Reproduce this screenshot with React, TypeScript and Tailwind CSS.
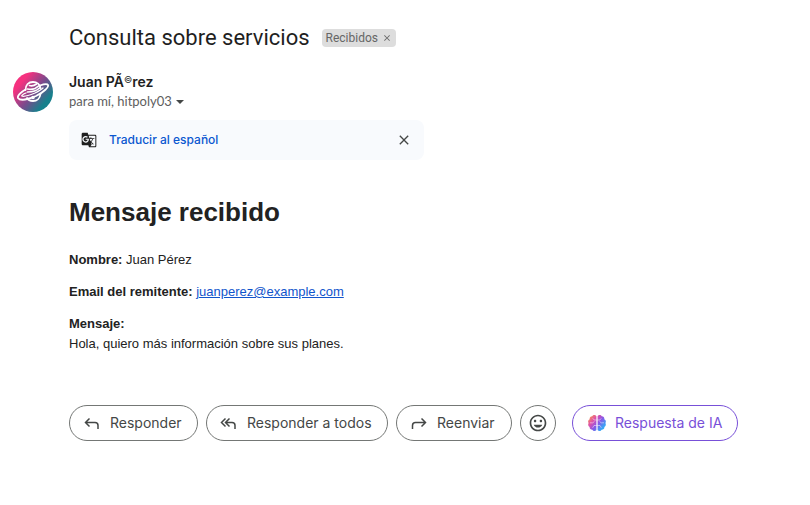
import type { ReactNode } from "react";
import { MdClose, MdGTranslate, MdInsertEmoticon } from "react-icons/md";

function Avatar() {
  return (
    <svg viewBox="0 0 40 40" className="size-10 shrink-0" role="img" aria-label="Juan Pérez">
      <defs>
        <linearGradient id="avatar" x1="0.1" y1="0.15" x2="0.9" y2="0.8">
          <stop offset="0.15" stopColor="#f5317f" />
          <stop offset="0.55" stopColor="#7b4a8c" />
          <stop offset="0.9" stopColor="#17808c" />
        </linearGradient>
      </defs>
      <circle cx="20" cy="20" r="20" fill="url(#avatar)" />
      <g fill="none" stroke="#fff" strokeLinecap="round" strokeLinejoin="round">
        <path d="M12.5 18c0-5 3-8 7.5-8 4 0 7 2.500 7.500 6" strokeWidth="1.8" />
        <path d="M12.500 17.500C8 20 4 24 5 26c2 3 10 1.500 18-2 8-4 13-9 12-11-1-2-4-1-8 .5" strokeWidth="1.8" />
        <path d="M13 21c-3 1-5 3-4 3 2 1 8-1 13-3 4-2 7-4 8-5" strokeWidth="1.3" />
        <path d="M14.500 17c4 1 8 0 11-3M14.500 20c5 0 9-1 12-4M16.500 13.500c3 1 5 0 7-1.500" strokeWidth="1.7" />
        <path d="M14 26c1 2 3 3 6 3 4 0 7-3 7.500-7" strokeWidth="1.8" />
        <circle cx="20" cy="25.500" r="1.2" strokeWidth="1.2" />
      </g>
    </svg>
  );
}

function CaretIcon() {
  return (
    <svg viewBox="0 0 8 4" className="h-1 w-2" fill="#444746" aria-hidden="true">
      <path d="M0 0h8L4 4z" />
    </svg>
  );
}

function ReplyIcon() {
  return (
    <svg viewBox="0 0 20 20" className="size-5" fill="none" stroke="currentColor" strokeWidth="1.5" aria-hidden="true">
      <path d="M7.500 5.500 3.500 9.500l4 4M4 9.500h9a3 3 0 0 1 3 3v3.500" />
    </svg>
  );
}

function ReplyAllIcon() {
  return (
    <svg viewBox="0 0 20 20" className="size-5" fill="none" stroke="currentColor" strokeWidth="1.5" aria-hidden="true">
      <path d="M6.500 5.500 2.500 9.500l4 4M10.500 5.500 6.500 9.500l4 4M7 9.500h6a3 3 0 0 1 3 3v3.500" />
    </svg>
  );
}

function ForwardIcon() {
  return (
    <svg viewBox="0 0 20 20" className="size-5" fill="none" stroke="currentColor" strokeWidth="1.5" aria-hidden="true">
      <path d="m12.500 5.500 4 4-4 4M16 9.500H6.500a3 3 0 0 0-3 3v3.500" />
    </svg>
  );
}

function BrainIcon() {
  return (
    <svg viewBox="0 0 20 20" className="size-5" aria-hidden="true">
      <defs>
        <linearGradient id="brain" gradientUnits="userSpaceOnUse" x1="2" y1="3" x2="18" y2="17">
          <stop offset="0.05" stopColor="#f58a5c" />
          <stop offset="0.3" stopColor="#dc4fae" />
          <stop offset="0.55" stopColor="#8758e8" />
          <stop offset="0.85" stopColor="#37a5f5" />
        </linearGradient>
      </defs>
      <path
        fill="url(#brain)"
        d="M9.400 3.200C8.500 1.500 6 1.500 5.200 3.200 3.300 3.200 2.300 4.800 2.700 6.300 1 7 .7 8.900 1.600 10c-.9 1.400-.4 3.300 1 4-.1 1.700 1.200 2.900 2.800 2.800.8 1.600 3.100 1.700 4 .2zM10.600 3.200c.9-1.700 3.400-1.700 4.200 0 1.900 0 2.900 1.600 2.500 3.100 1.700.7 2 2.600 1.100 3.700.9 1.400.4 3.300-1 4 .1 1.700-1.200 2.900-2.800 2.800-.8 1.600-3.100 1.700-4 .2z"
      />
      <path
        fill="none"
        stroke="#fff"
        strokeOpacity="0.6"
        strokeWidth="0.8"
        strokeLinecap="round"
        d="M9.400 7H7.200L6 5.600M3.400 9.800h2.400l1.400-1.200M9.400 12.500H7l-1.200 2M10.600 7h2.200L14 5.600M16.600 9.800h-2.400l-1.400-1.200M10.600 12.500H13l1.200 2"
      />
    </svg>
  );
}

function ActionButton({ icon, children, className }: { icon: ReactNode; children: ReactNode; className: string }) {
  return (
    <button
      type="button"
      className={`flex h-9 shrink-0 items-center gap-2 whitespace-nowrap rounded-full border text-sm ${className}`}
    >
      {icon}
      {children}
    </button>
  );
}

export default function App() {
  return (
    <main className="bg-white pt-6 pr-4 pl-[13px] font-['Inter','Liberation_Sans',sans-serif] text-[#1f1f1f]">
      <header className="flex h-7 items-center gap-3 pl-14">
        <h1 className="font-['Roboto',sans-serif] text-[22px] leading-7">Consulta sobre servicios</h1>
        <span className="flex h-[18px] items-center gap-1 rounded bg-[#dddddd] px-1 font-['Roboto',sans-serif] text-xs text-[#666666]">
          Recibidos
          <button type="button" aria-label="Quitar etiqueta Recibidos">
            <MdClose className="size-[10px]" />
          </button>
        </span>
      </header>

      <div className="mt-5 flex gap-4">
        <Avatar />
        <article className="min-w-0 flex-1">
          <h2 className="h-5 text-sm leading-5 font-semibold">
            Juan PÃ<span className="align-top text-[9px] leading-4 font-normal">©</span>rez
          </h2>
          <button
            type="button"
            className="flex h-5 items-center gap-1 font-['Lato',sans-serif] text-[13px] text-[#5e5e5e]"
          >
            para mí, hitpoly03
            <CaretIcon />
          </button>

          <div className="mt-2 flex h-10 max-w-[355px] items-center rounded-lg bg-[#f8fafd] px-3">
            <MdGTranslate className="size-4" />
            <button type="button" className="ml-3 text-xs font-medium text-[#0b57d0]">
              Traducir al español
            </button>
            <button type="button" aria-label="Cerrar" className="ml-auto text-[#444746]">
              <MdClose className="size-4" />
            </button>
          </div>

          <div className="mt-8 font-['Liberation_Sans',Arial,sans-serif] text-[13px] leading-5 text-[#222222]">
            <h3 className="text-[26px] leading-10 font-bold">Mensaje recibido</h3>
            <p className="mt-[18px]">
              <strong>Nombre:</strong> Juan Pérez
            </p>
            <p className="mt-3">
              <strong>Email del remitente:</strong>{" "}
              <a href="mailto:juanperez@example.com" className="text-[#1155cc] underline">
                juanperez@example.com
              </a>
            </p>
            <p className="mt-3">
              <strong>Mensaje:</strong>
              <br />
              Hola, quiero más información sobre sus planes.
            </p>
          </div>

          <div className="mt-[51px] flex gap-2 text-[#444746]">
            <ActionButton icon={<ReplyIcon />} className="w-[129px] border-[#747775] pl-3">
              Responder
            </ActionButton>
            <ActionButton icon={<ReplyAllIcon />} className="w-[182px] border-[#747775] pl-3">
              Responder a todos
            </ActionButton>
            <ActionButton icon={<ForwardIcon />} className="w-[116px] border-[#747775] pl-3">
              Reenviar
            </ActionButton>
            <button
              type="button"
              aria-label="Añadir reacción"
              className="flex size-9 shrink-0 items-center justify-center rounded-full border border-[#747775]"
            >
              <MdInsertEmoticon className="size-5" />
            </button>
            <ActionButton icon={<BrainIcon />} className="ml-2 w-[166px] border-[#7850d8] pl-[14px] text-[#7850d8]">
              Respuesta de IA
            </ActionButton>
          </div>
        </article>
      </div>
    </main>
  );
}
